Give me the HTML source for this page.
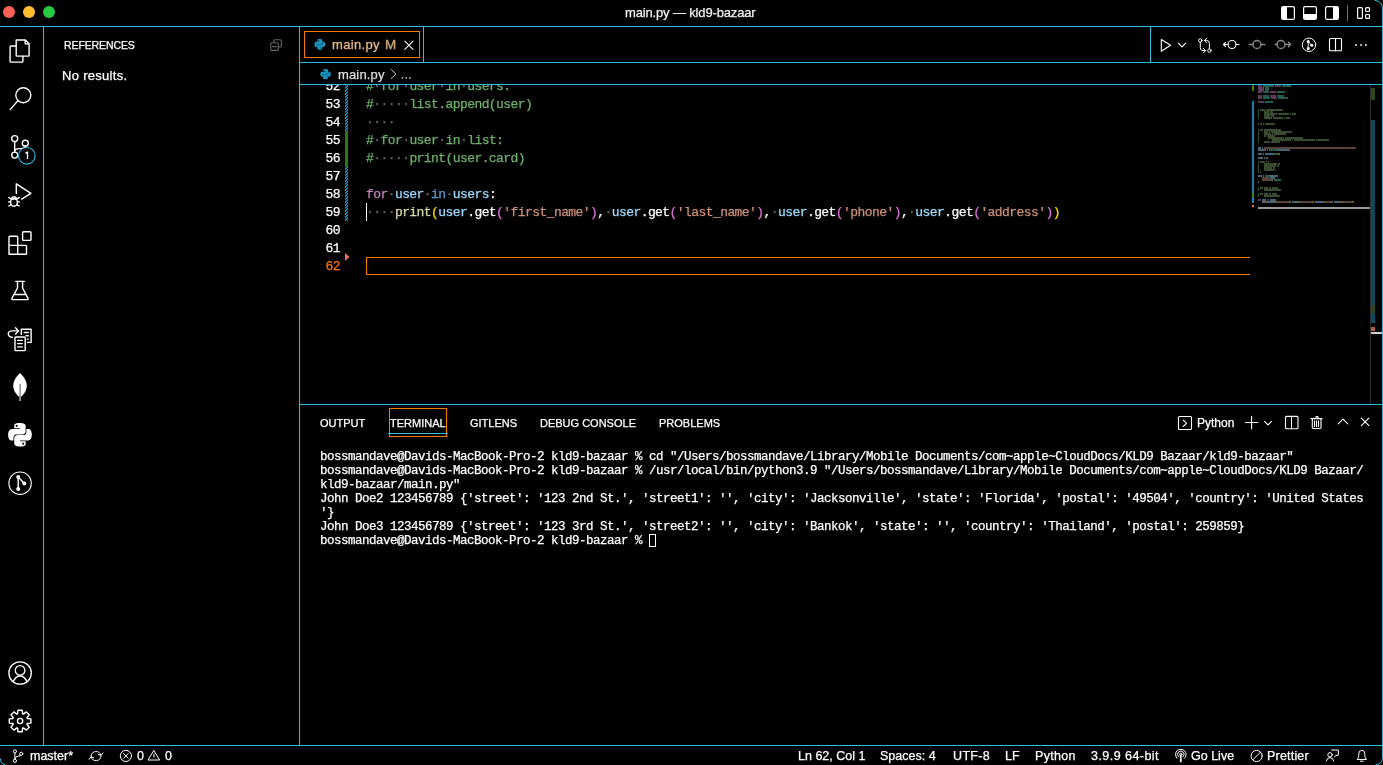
<!DOCTYPE html>
<html><head><meta charset="utf-8">
<style>
*{margin:0;padding:0;box-sizing:border-box}
html,body{width:1383px;height:765px;overflow:hidden;background:#000;color:#fff;font-family:"Liberation Sans",sans-serif}
.t,.cl,.ln,.term,.sb{will-change:transform;-webkit-text-stroke:0.25px currentColor}
.abs{position:absolute}
.b{background:#2dbde0}
.mono{font-family:"Liberation Mono",monospace}
.t{position:absolute;white-space:pre}
.ln{position:absolute;left:0;width:40px;padding-top:1px;text-align:right;font:13px/18px "Liberation Mono",monospace;letter-spacing:-0.6px;height:18px}
.cl{position:absolute;left:66px;padding-top:1px;font:13px/18px "Liberation Mono",monospace;letter-spacing:-0.575px;white-space:pre;height:18px}
.cl i{font-style:normal;color:#666}
.cm{color:#6db26a}.kw{color:#c586c0}.vr{color:#9cdcfe}.ky{color:#569cd6}.fn{color:#dcdcaa}.b1{color:#ffd700}.b2{color:#da70d6}.st{color:#ce9178}
.hatch{background:repeating-linear-gradient(-45deg,#1b81a8 0,#1b81a8 1px,transparent 1px,transparent 3px)}
.term{position:absolute;white-space:pre;font:12.5px/14px "Liberation Mono",monospace;letter-spacing:-0.5px;color:#fff}
.sb{position:absolute;top:749px;font-size:12.5px;white-space:pre;color:#fff}
</style></head><body>
<!-- borders -->
<div class="abs b" style="left:0;top:26px;width:1383px;height:1px"></div>
<div class="abs b" style="left:43px;top:27px;width:1px;height:718px"></div>
<div class="abs b" style="left:299px;top:27px;width:1px;height:718px"></div>
<div class="abs b" style="left:300px;top:62px;width:1083px;height:1px"></div>
<div class="abs b" style="left:423px;top:27px;width:1px;height:35px"></div>
<div class="abs b" style="left:300px;top:84px;width:1083px;height:1px"></div>
<div class="abs b" style="left:300px;top:404px;width:1083px;height:1px"></div>
<div class="abs b" style="left:1382px;top:27px;width:1px;height:718px"></div>
<div class="abs b" style="left:0;top:745px;width:1383px;height:1px"></div>

<!-- traffic lights -->
<div class="abs" style="left:3px;top:6px;width:12px;height:12px;border-radius:50%;background:#fe5f57"></div>
<div class="abs" style="left:23px;top:6px;width:12px;height:12px;border-radius:50%;background:#febc2e"></div>
<div class="abs" style="left:43px;top:6px;width:12px;height:12px;border-radius:50%;background:#28c840"></div>
<div class="t" style="left:625px;top:5px;font-size:13px;letter-spacing:-0.15px;color:#f2f2f2">main.py — kld9-bazaar</div>

<svg class="abs" style="left:0;top:0" width="1383" height="765" viewBox="0 0 1383 765">
<defs><path id="py" d="M14.25.18l.9.2.73.26.59.3.45.32.34.34.25.34.16.33.1.3.04.26.02.2-.01.13V8.5l-.05.63-.13.55-.21.46-.26.38-.3.31-.33.25-.35.19-.35.14-.33.1-.3.07-.26.04-.21.02H8.77l-.69.05-.59.14-.5.22-.41.27-.33.32-.27.35-.2.36-.15.37-.1.35-.07.32-.04.27-.02.21v3.06H3.17l-.21-.03-.28-.07-.32-.12-.35-.18-.36-.26-.36-.36-.35-.46-.32-.59-.28-.73-.21-.88-.14-1.05-.05-1.23.06-1.22.16-1.04.24-.87.32-.71.36-.57.4-.44.42-.33.42-.24.4-.16.36-.1.32-.05.24-.01h.16l.06.01h8.16v-.83H6.18l-.01-2.75-.02-.37.05-.34.11-.31.17-.28.25-.26.31-.23.38-.2.44-.18.51-.15.58-.12.64-.1.71-.06.77-.04.84-.02 1.27.05zm-6.3 1.98l-.23.33-.08.41.08.41.23.34.33.22.41.09.41-.09.33-.22.23-.34.08-.41-.08-.41-.23-.33-.33-.22-.41-.09-.41.09zm13.09 3.95l.28.06.32.12.35.18.36.27.36.35.35.47.32.59.28.73.21.88.14 1.04.05 1.23-.06 1.230-.16 1.04-.24.86-.32.71-.36.57-.4.45-.42.33-.42.24-.4.16-.36.09-.32.05-.24.02-.16-.01h-8.22v.82h5.84l.01 2.76.02.36-.05.34-.11.31-.17.29-.25.25-.31.24-.38.2-.44.17-.51.15-.58.13-.64.09-.71.07-.77.04-.84.01-1.27-.04-1.07-.14-.9-.2-.73-.25-.59-.3-.45-.33-.34-.34-.25-.34-.16-.33-.1-.3-.04-.25-.02-.2.01-.13v-5.34l.05-.64.13-.54.21-.46.26-.38.3-.32.33-.24.35-.2.35-.14.33-.1.3-.06.26-.04.21-.02.13-.01h5.84l.69-.05.59-.14.5-.21.41-.28.33-.32.27-.35.2-.36.15-.36.1-.35.07-.32.04-.28.02-.21V6.07h2.09l.14.01zm-6.47 14.25l-.23.33-.08.41.08.41.23.33.33.23.41.08.41-.08.33-.23.23-.33.08-.41-.08-.41-.23-.33-.33-.23-.41-.08-.41.08z"/></defs>
<g fill="none" stroke="#fff" stroke-width="1.4" stroke-linecap="round" stroke-linejoin="round">
<!-- explorer -->
<path d="M16.2 40 H25.4 L29.1 43.8 V55.2 Q29.1 56.1 28.2 56.1 H17.1 Q16.2 56.1 16.2 55.2 Z M25.2 40.2 V43.9 H29"/>
<path d="M15.9 46 H11 Q10.1 46 10.1 46.9 V61.2 Q10.1 62.1 11 62.1 H22 Q22.9 62.1 22.9 61.2 V56.3"/>
<!-- search -->
<circle cx="23.3" cy="95.2" r="7.5"/>
<path d="M17.8 100.8 L10.2 109.6"/>
<!-- scm -->
<circle cx="14.7" cy="138.6" r="3"/>
<circle cx="25.3" cy="143.2" r="3"/>
<circle cx="14.7" cy="155.1" r="3"/>
<path d="M14.7 141.6 V152.1 M14.7 151 Q15.5 148.6 19 148.6 H21.5 Q25 148.6 25.3 146.2"/>
<!-- run debug -->
<path d="M16.3 193.6 V183.8 L30.9 193.3 L21.7 199.2"/>
<ellipse cx="14" cy="202.2" rx="3.4" ry="4"/>
<path d="M11 198.8 Q14 194.5 17 198.8 M11 199 H17 M8.8 197.6 L10.9 198.8 M19.2 197.6 L17.1 198.8 M8.5 201.9 H10.6 M17.4 201.9 H19.5 M8.8 206 L10.9 204.8 M19.2 206 L17.1 204.8"/>
<!-- extensions -->
<rect x="22.6" y="231.8" width="8.4" height="8.6" rx="1"/>
<path d="M9 254.3 V237.1 Q9 236.2 9.9 236.2 H16.8 Q17.7 236.2 17.7 237.1 V245.4 H25.6 Q26.5 245.4 26.5 246.3 V253.4 Q26.5 254.3 25.6 254.3 Z M9 245.4 H17.7 V254.3"/>
<!-- testing -->
<path d="M15.8 281.4 H24.3 M17.5 281.4 V288 L11.9 298.4 Q11.5 299.6 12.8 299.6 H27.3 Q28.5 299.6 28 298.4 L22.6 288 V281.4 M14.6 294.5 H25.5"/>
<!-- remote/todo -->
<rect x="15" y="337" width="10.2" height="13.6" rx="0.8" stroke-width="1.4"/>
<path d="M17.6 340.4 H22.2 M17.6 343.6 H22.2 M17.6 346.9 H22.2" stroke-width="1.4"/>
<path d="M21.3 334.4 V329.3 H31.1 V342.4 H27.6 M24.3 332.5 H28.3 M26 335.8 H28.3 M27.2 339.1 H28.3" stroke-width="1.4"/>
<path d="M12.3 337.5 Q8.3 336.8 8.3 333.8 Q8.3 330.9 12.3 330.9 H18 M15.6 327.8 L18.6 330.9 L15.6 334" stroke-width="1.4"/>
<!-- gitlens -->
<circle cx="20.1" cy="483.2" r="11.2" stroke-width="1.1"/>
<path d="M18.2 477.1 V489 M18.2 477.1 L24.3 483.4"/>
<!-- account -->
<circle cx="20.1" cy="673" r="11.2" stroke-width="1.3"/>
<circle cx="20.1" cy="670.4" r="4.8" stroke-width="1.3"/>
<path d="M13.2 681.5 Q16 676 20.1 676 Q24.2 676 27 681.5" stroke-width="1.3"/>
<!-- gear -->
<path d="M17.56 713.84 L18.00 710.20 L22.20 710.20 L22.64 713.84 L23.37 714.14 L26.25 711.88 L29.22 714.85 L26.96 717.73 L27.26 718.46 L30.90 718.90 L30.90 723.10 L27.26 723.54 L26.96 724.27 L29.22 727.15 L26.25 730.12 L23.37 727.86 L22.64 728.16 L22.20 731.80 L18.00 731.80 L17.56 728.16 L16.83 727.86 L13.95 730.12 L10.98 727.15 L13.24 724.27 L12.94 723.54 L9.30 723.10 L9.30 718.90 L12.94 718.46 L13.24 717.73 L10.98 714.85 L13.95 711.88 L16.83 714.14 Z" stroke-width="1.4"/>
<circle cx="20.1" cy="721" r="2.6" stroke-width="1.4"/>
</g>
<g fill="#fff">
<circle cx="18.2" cy="477.1" r="2"/><circle cx="24.3" cy="483.4" r="2"/><circle cx="18.2" cy="489" r="2"/>
<path d="M20 373 C24 377 26.9 381 26.8 386 C26.6 391 23.5 395 20.1 397.6 C16.7 395 13.4 391 13.2 386 C13.1 381 16 377 20 373 Z"/>
<rect x="19.3" y="396" width="1.6" height="5" fill="#aaa"/>
<path d="M20.1 384 V397" stroke="#555" stroke-width="1"/>
<use href="#py" transform="translate(8.2 423) scale(0.98)" fill-rule="evenodd"/>
</g>
<!-- scm badge -->
<circle cx="26.8" cy="155.8" r="8.3" fill="#000" stroke="#2dbde0" stroke-width="1.1"/>

</svg>
<svg class="abs" style="left:0;top:0" width="1383" height="765" viewBox="0 0 1383 765">
<g fill="none" stroke-linecap="round" stroke-linejoin="round">
<!-- collapse all -->
<g stroke="#646464" stroke-width="1.1">
<rect x="270.7" y="42.8" width="7.6" height="7.6" rx="1"/>
<path d="M273.8 42.6 V40.7 Q273.8 39.7 274.8 39.7 H280.3 Q281.3 39.7 281.3 40.7 V46 Q281.3 47 280.3 47 H278.5 M272.4 46.6 H276.6"/>
</g>
<!-- title layout icons -->
<g stroke="#fff" stroke-width="1.2">
<rect x="1281.6" y="6.6" width="12.8" height="12.8" rx="1.5"/>
<rect x="1303.6" y="6.6" width="12.8" height="12.8" rx="1.5"/>
<rect x="1325.6" y="6.6" width="12.8" height="12.8" rx="1.5"/>
<rect x="1357.6" y="7.6" width="4.8" height="10.8" rx="1"/>
<rect x="1365.6" y="7.6" width="3.9" height="3.9" rx="1"/>
<rect x="1365.6" y="14.5" width="3.9" height="3.9" rx="1"/>
</g>
<path d="M1347.5 5.5 V20.5" stroke="#707070" stroke-width="1"/>
<!-- tab close -->
<path d="M404.8 41.2 L413 49.4 M413 41.2 L404.8 49.4" stroke="#fff" stroke-width="1.1"/>
<!-- tab actions -->
<g stroke="#fff" stroke-width="1.1">
<path d="M1161.3 39.5 V51.2 L1170.6 45.3 Z"/>
<path d="M1178.3 43.2 L1182 46.9 L1185.7 43.2"/>
<g stroke-width="1">
<circle cx="1200.3" cy="40.5" r="1.7"/>
<circle cx="1209.4" cy="50.6" r="1.7"/>
<path d="M1200.3 42.2 V47.6 Q1200.3 50.6 1203 50.6 H1205.4 M1203.3 48.3 L1205.6 50.6 L1203.3 52.9"/>
<path d="M1209.4 48.9 V43.4 Q1209.4 40.4 1206.7 40.4 H1204.5 M1206.8 38.1 L1204.5 40.4 L1206.8 42.7"/>
</g>
<circle cx="1232" cy="44.5" r="4"/>
<path d="M1228 44.5 H1223.5 M1236 44.5 H1239 M1225.6 42.3 L1223.5 44.5 L1225.6 46.7"/>
<rect x="1329.5" y="38.5" width="12" height="12.2" rx="1"/><path d="M1335.5 38.5 V50.7"/>
<circle cx="1309" cy="44.8" r="6.7" stroke-width="1"/>
</g>
<g stroke="#8a8a8a" stroke-width="1.3">
<circle cx="1257" cy="44.5" r="4"/>
<path d="M1249.2 44.5 H1253 M1261 44.5 H1264.8"/>
<circle cx="1281" cy="44.5" r="4"/>
<path d="M1275.2 44.5 H1277 M1285 44.5 H1290.5 M1288.5 42.3 L1290.6 44.5 L1288.5 46.7"/>
</g>
<path d="M1308.2 41.6 V48.5 M1308.2 41.6 L1311.8 45.2" stroke="#fff" stroke-width="0.9"/>
<g fill="#fff"><circle cx="1308.2" cy="41.4" r="1.5"/><circle cx="1311.8" cy="45.3" r="1.5"/><circle cx="1308.2" cy="48.6" r="1.5"/>
<circle cx="1356" cy="45" r="0.9"/><circle cx="1361" cy="45" r="0.9"/><circle cx="1366" cy="45" r="0.9"/></g>
<!-- breadcrumb chevron -->
<path d="M391.3 69.5 L395.8 74 L391.3 78.5" stroke="#ccc" stroke-width="1"/>
<!-- panel header icons -->
<g stroke="#fff" stroke-width="1.1">
<rect x="1178.5" y="416.5" width="13" height="13" rx="1"/>
<path d="M1183.3 420.2 L1186.5 423.3 L1183.3 426.5"/>
<path d="M1245.5 422.5 H1257.7 M1251.6 416.3 V428.8"/>
<path d="M1264.5 421.3 L1268 424.8 L1271.5 421.3"/>
<rect x="1285.5" y="416.4" width="12.5" height="12.4" rx="1"/>
<path d="M1291.5 416.4 V428.8" stroke-width="1"/>
<path d="M1311 418.6 H1322 M1316 418.4 V417.2 Q1316 416.6 1316.6 416.6 H1317.5 Q1318.1 416.6 1318.1 417.2 V418.4 M1312.3 418.8 V427.6 Q1312.3 428.5 1313.2 428.5 H1320.1 Q1321 428.5 1321 427.6 V418.8 M1314.5 420.8 V426.4 M1316.5 420.8 V426.4 M1318.5 420.8 V426.4"/>
<path d="M1338.2 423.8 L1343 419.2 L1347.8 423.8"/>
<path d="M1361.3 418.1 L1368.9 425.7 M1368.9 418.1 L1361.3 425.7"/>
</g>
<!-- status bar icons -->
<g stroke="#fff" stroke-width="1">
<circle cx="14.9" cy="751.4" r="1.6"/><circle cx="14.9" cy="760.8" r="1.6"/><circle cx="21.2" cy="753.8" r="1.6"/>
<path d="M14.9 753 V759.2 M14.9 758.8 Q15.4 756.4 18 756.2 Q20.8 756 21.2 755.4"/>
<path d="M91.1 756.2 A5 5 0 0 1 100.9 755.2 M103 752.9 L101 755.4 L98.4 754.4 M101 756 A5 5 0 0 1 91.2 757 M89.1 759.3 L91.1 756.8 L93.7 757.8"/>
<circle cx="125.9" cy="755.9" r="5.6"/>
<path d="M123.6 753.6 L128.2 758.2 M128.2 753.6 L123.6 758.2"/>
<path d="M154 750.8 L159.6 760 H148.4 Z M154 754 V757.2"/>
<circle cx="1180.8" cy="754.4" r="1.2"/>
<path d="M1178.3 756.6 A3.3 3.3 0 1 1 1183.3 756.6 M1176.9 758.2 A5.3 5.3 0 1 1 1184.7 758.2" stroke-width="1"/>
<path d="M1180.8 755.5 V761.4" stroke-width="1.8"/>
<circle cx="1256.6" cy="756" r="5.6"/>
<path d="M1252.7 759.9 L1260.5 752.1"/>
<circle cx="1330" cy="754.8" r="2.2"/>
<path d="M1326.3 761 Q1326.8 757.6 1330 757.6 Q1333.2 757.6 1333.7 761 M1331.5 750 H1338.3 V755.4 H1336 L1334.4 757"/>
<path d="M1357.4 759.2 Q1358.8 758 1358.8 755.5 V753.8 Q1358.8 750.3 1361.8 750.3 Q1364.8 750.3 1364.8 753.8 V755.5 Q1364.8 758 1366.2 759.2 Z M1360.4 761.2 H1363.2"/>
</g>
<!-- window right border + corners -->
<path d="M0.4 759 Q0.6 764.4 5 764.6" stroke="#2dbde0" stroke-width="1"/>
<path d="M1375 0.4 Q1382.5 1 1382.5 9 V757 Q1382.5 764.5 1376 764.6" stroke="#2dbde0" stroke-width="1"/>
</g>
<g fill="#1a95c3">
<use href="#py" transform="translate(314.5 39) scale(0.445)" fill-rule="evenodd"/>
<use href="#py" transform="translate(320.4 69) scale(0.43)" fill-rule="evenodd"/>
</g>
<g fill="#ccc"><circle cx="402.5" cy="77.8" r="0.9"/><circle cx="406.2" cy="77.8" r="0.9"/><circle cx="409.9" cy="77.8" r="0.9"/></g>
</svg>
<div class="abs" style="left:1282px;top:7px;width:5px;height:12px;background:#fff;border-radius:1px 0 0 1px"></div>
<div class="abs" style="left:1304px;top:14px;width:12px;height:5px;background:#fff;border-radius:0 0 1px 1px"></div>
<div class="abs" style="left:1333px;top:7px;width:5px;height:12px;background:#fff;border-radius:0 1px 1px 0"></div>
<svg class="abs" style="left:0;top:0" width="40" height="170"><path d="M25.5 153.4 L27.5 152 V158.9" stroke="#fff" stroke-width="1.3" fill="none" stroke-linejoin="round"/></svg>
<!-- sidebar -->
<div class="t" style="left:64px;top:39px;font-size:10.5px;letter-spacing:-0.1px">REFERENCES</div>
<div class="t" style="left:62px;top:68px;font-size:13px;letter-spacing:0.3px">No results.</div>

<!-- tab -->
<div class="abs" style="left:304px;top:31px;width:116px;height:27px;border:1px solid #f97800"></div>
<div class="t" style="left:332px;top:37px;font-size:13px;letter-spacing:0.33px;color:#ecbd86">main.py</div>
<div class="t" style="left:384.5px;top:38px;font-size:12px;-webkit-text-stroke:0.35px #caa57c;color:#caa57c;transform:scaleX(1.12);transform-origin:0 0">M</div>

<!-- breadcrumbs -->
<div class="t" style="left:338px;top:67px;font-size:13px;letter-spacing:0.15px;color:#ddd">main.py</div>

<!-- editor -->
<div class="abs" id="editor" style="left:300px;top:85px;width:1082px;height:319px;overflow:hidden">
<div class="ln" style="top:-8px;color:#fff">52</div>
<div class="cl" style="top:-8px"><span class="cm">#</span><i>·</i><span class="cm">for</span><i>·</i><span class="cm">user</span><i>·</i><span class="cm">in</span><i>·</i><span class="cm">users:</span></div>
<div class="ln" style="top:10px;color:#fff">53</div>
<div class="cl" style="top:10px"><span class="cm">#</span><i>·····</i><span class="cm">list.append(user)</span></div>
<div class="ln" style="top:28px;color:#fff">54</div>
<div class="cl" style="top:28px"><i>····</i></div>
<div class="ln" style="top:46px;color:#fff">55</div>
<div class="cl" style="top:46px"><span class="cm">#</span><i>·</i><span class="cm">for</span><i>·</i><span class="cm">user</span><i>·</i><span class="cm">in</span><i>·</i><span class="cm">list:</span></div>
<div class="ln" style="top:64px;color:#fff">56</div>
<div class="cl" style="top:64px"><span class="cm">#</span><i>·····</i><span class="cm">print(user.card)</span></div>
<div class="ln" style="top:82px;color:#fff">57</div>
<div class="cl" style="top:82px"></div>
<div class="ln" style="top:100px;color:#fff">58</div>
<div class="cl" style="top:100px"><span class="kw">for</span><i>·</i><span class="vr">user</span><i>·</i><span class="ky">in</span><i>·</i><span class="vr">users</span>:</div>
<div class="ln" style="top:118px;color:#fff">59</div>
<div class="cl" style="top:118px"><i>····</i><span class="fn">print</span><span class="b1">(</span><span class="vr">user</span>.get<span class="b2">(</span><span class="st">'first_name'</span><span class="b2">)</span>,<i>·</i><span class="vr">user</span>.get<span class="b2">(</span><span class="st">'last_name'</span><span class="b2">)</span>,<i>·</i><span class="vr">user</span>.get<span class="b2">(</span><span class="st">'phone'</span><span class="b2">)</span>,<i>·</i><span class="vr">user</span>.get<span class="b2">(</span><span class="st">'address'</span><span class="b2">)</span><span class="b1">)</span></div>
<div class="ln" style="top:136px;color:#fff">60</div>
<div class="cl" style="top:136px"></div>
<div class="ln" style="top:154px;color:#fff">61</div>
<div class="cl" style="top:154px"></div>
<div class="ln" style="top:172px;color:#f97800">62</div>
<div class="cl" style="top:172px"></div>
<svg class="abs" style="left:45px;top:0" width="3" height="136"><defs><pattern id="hp" width="3" height="3" patternUnits="userSpaceOnUse" y="1"><rect x="1" y="0" width="2" height="1" fill="#1b8ec0"/><rect x="0" y="1" width="2" height="1" fill="#1b8ec0"/><rect x="0" y="2" width="1" height="1" fill="#1b8ec0"/><rect x="2" y="2" width="1" height="1" fill="#1b8ec0"/></pattern></defs><rect x="0" y="0" width="3" height="46" fill="url(#hp)"/><rect x="0" y="82" width="3" height="54" fill="url(#hp)"/></svg>
<div class="abs" style="left:45px;top:46px;width:3px;height:36px;background:#2a7814"></div>

<div class="abs" style="left:66px;top:118px;width:1px;height:18px;background:#fff"></div>
<div class="abs" style="left:66px;top:172px;width:884px;height:18px;border:1px solid #f97800;border-right:none"></div>
<svg class="abs" style="left:45px;top:168px" width="5" height="9"><path d="M0 0 L4.5 4 L0 8 Z" fill="#f2705f"/></svg>
</div>
<!-- minimap -->
<svg class="abs" style="left:0;top:0" width="1383" height="765"><g opacity="0.45"><rect x="1258" y="85" width="4" height="2" fill="#c586c0"/><rect x="1263" y="85" width="11" height="2" fill="#4ec9b0"/><rect x="1275" y="85" width="6" height="2" fill="#c586c0"/><rect x="1282" y="85" width="9" height="2" fill="#4ec9b0"/><rect x="1258" y="87" width="6" height="2" fill="#c586c0"/><rect x="1265" y="87" width="4" height="2" fill="#4ec9b0"/><rect x="1258" y="89" width="6" height="2" fill="#c586c0"/><rect x="1265" y="89" width="4" height="2" fill="#4ec9b0"/><rect x="1258" y="91" width="4" height="2" fill="#c586c0"/><rect x="1263" y="91" width="6" height="2" fill="#4ec9b0"/><rect x="1270" y="91" width="6" height="2" fill="#c586c0"/><rect x="1277" y="91" width="8" height="2" fill="#4ec9b0"/><rect x="1258" y="95" width="4" height="2" fill="#c586c0"/><rect x="1263" y="95" width="6" height="2" fill="#4ec9b0"/><rect x="1270" y="95" width="6" height="2" fill="#c586c0"/><rect x="1277" y="95" width="7" height="2" fill="#4ec9b0"/><rect x="1258" y="97" width="4" height="2" fill="#c586c0"/><rect x="1263" y="97" width="7" height="2" fill="#4ec9b0"/><rect x="1271" y="97" width="6" height="2" fill="#c586c0"/><rect x="1278" y="97" width="10" height="2" fill="#4ec9b0"/><rect x="1258" y="101" width="6" height="2" fill="#c586c0"/><rect x="1265" y="101" width="8" height="2" fill="#4ec9b0"/><rect x="1258" y="109" width="1" height="2" fill="#7ca668"/><rect x="1260" y="109" width="5" height="2" fill="#7ca668"/><rect x="1266" y="109" width="17" height="2" fill="#7ca668"/><rect x="1258" y="111" width="1" height="2" fill="#7ca668"/><rect x="1264" y="111" width="5" height="2" fill="#7ca668"/><rect x="1270" y="111" width="3" height="2" fill="#7ca668"/><rect x="1258" y="113" width="1" height="2" fill="#7ca668"/><rect x="1264" y="113" width="13" height="2" fill="#7ca668"/><rect x="1278" y="113" width="11" height="2" fill="#7ca668"/><rect x="1290" y="113" width="1" height="2" fill="#7ca668"/><rect x="1292" y="113" width="4" height="2" fill="#7ca668"/><rect x="1258" y="115" width="1" height="2" fill="#7ca668"/><rect x="1264" y="115" width="6" height="2" fill="#7ca668"/><rect x="1271" y="115" width="3" height="2" fill="#7ca668"/><rect x="1258" y="117" width="1" height="2" fill="#7ca668"/><rect x="1264" y="117" width="8" height="2" fill="#7ca668"/><rect x="1273" y="117" width="10" height="2" fill="#7ca668"/><rect x="1284" y="117" width="1" height="2" fill="#7ca668"/><rect x="1286" y="117" width="4" height="2" fill="#7ca668"/><rect x="1258" y="123" width="1" height="2" fill="#7ca668"/><rect x="1260" y="123" width="2" height="2" fill="#7ca668"/><rect x="1263" y="123" width="1" height="2" fill="#7ca668"/><rect x="1265" y="123" width="10" height="2" fill="#7ca668"/><rect x="1258" y="129" width="1" height="2" fill="#7ca668"/><rect x="1260" y="129" width="3" height="2" fill="#7ca668"/><rect x="1264" y="129" width="17" height="2" fill="#7ca668"/><rect x="1258" y="131" width="1" height="2" fill="#7ca668"/><rect x="1264" y="131" width="4" height="2" fill="#7ca668"/><rect x="1269" y="131" width="1" height="2" fill="#7ca668"/><rect x="1271" y="131" width="21" height="2" fill="#7ca668"/><rect x="1258" y="133" width="1" height="2" fill="#7ca668"/><rect x="1264" y="133" width="7" height="2" fill="#7ca668"/><rect x="1272" y="133" width="1" height="2" fill="#7ca668"/><rect x="1274" y="133" width="12" height="2" fill="#7ca668"/><rect x="1258" y="135" width="1" height="2" fill="#7ca668"/><rect x="1264" y="135" width="2" height="2" fill="#7ca668"/><rect x="1267" y="135" width="8" height="2" fill="#7ca668"/><rect x="1258" y="137" width="1" height="2" fill="#7ca668"/><rect x="1268" y="137" width="16" height="2" fill="#7ca668"/><rect x="1285" y="137" width="18" height="2" fill="#7ca668"/><rect x="1258" y="139" width="1" height="2" fill="#7ca668"/><rect x="1272" y="139" width="19" height="2" fill="#7ca668"/><rect x="1292" y="139" width="1" height="2" fill="#7ca668"/><rect x="1294" y="139" width="21" height="2" fill="#7ca668"/><rect x="1316" y="139" width="13" height="2" fill="#7ca668"/><rect x="1258" y="141" width="1" height="2" fill="#7ca668"/><rect x="1264" y="141" width="6" height="2" fill="#7ca668"/><rect x="1271" y="141" width="9" height="2" fill="#7ca668"/><rect x="1258" y="147" width="3" height="2" fill="#9cdcfe"/><rect x="1262" y="147" width="1" height="2" fill="#d4d4d4"/><rect x="1264" y="147" width="92" height="2" fill="#ce9178"/><rect x="1258" y="149" width="8" height="2" fill="#9cdcfe"/><rect x="1267" y="149" width="1" height="2" fill="#d4d4d4"/><rect x="1269" y="149" width="8" height="2" fill="#4ec9b0"/><rect x="1277" y="149" width="1" height="2" fill="#d4d4d4"/><rect x="1278" y="149" width="3" height="2" fill="#9cdcfe"/><rect x="1281" y="149" width="1" height="2" fill="#ffd700"/><rect x="1282" y="149" width="3" height="2" fill="#9cdcfe"/><rect x="1285" y="149" width="1" height="2" fill="#d4d4d4"/><rect x="1286" y="149" width="3" height="2" fill="#9cdcfe"/><rect x="1289" y="149" width="1" height="2" fill="#ffd700"/><rect x="1258" y="153" width="4" height="2" fill="#9cdcfe"/><rect x="1263" y="153" width="1" height="2" fill="#d4d4d4"/><rect x="1265" y="153" width="8" height="2" fill="#9cdcfe"/><rect x="1273" y="153" width="1" height="2" fill="#d4d4d4"/><rect x="1274" y="153" width="4" height="2" fill="#4ec9b0"/><rect x="1278" y="153" width="2" height="2" fill="#ffd700"/><rect x="1258" y="157" width="5" height="2" fill="#9cdcfe"/><rect x="1264" y="157" width="1" height="2" fill="#d4d4d4"/><rect x="1266" y="157" width="2" height="2" fill="#d4d4d4"/><rect x="1258" y="161" width="1" height="2" fill="#7ca668"/><rect x="1260" y="161" width="5" height="2" fill="#7ca668"/><rect x="1266" y="161" width="1" height="2" fill="#7ca668"/><rect x="1268" y="161" width="1" height="2" fill="#7ca668"/><rect x="1258" y="163" width="1" height="2" fill="#7ca668"/><rect x="1264" y="163" width="13" height="2" fill="#7ca668"/><rect x="1278" y="163" width="2" height="2" fill="#7ca668"/><rect x="1258" y="165" width="1" height="2" fill="#7ca668"/><rect x="1264" y="165" width="12" height="2" fill="#7ca668"/><rect x="1277" y="165" width="2" height="2" fill="#7ca668"/><rect x="1258" y="167" width="1" height="2" fill="#7ca668"/><rect x="1264" y="167" width="8" height="2" fill="#7ca668"/><rect x="1273" y="167" width="2" height="2" fill="#7ca668"/><rect x="1258" y="169" width="1" height="2" fill="#7ca668"/><rect x="1264" y="169" width="10" height="2" fill="#7ca668"/><rect x="1275" y="169" width="1" height="2" fill="#7ca668"/><rect x="1258" y="171" width="1" height="2" fill="#7ca668"/><rect x="1260" y="171" width="1" height="2" fill="#7ca668"/><rect x="1258" y="175" width="4" height="2" fill="#9cdcfe"/><rect x="1263" y="175" width="1" height="2" fill="#d4d4d4"/><rect x="1265" y="175" width="4" height="2" fill="#4ec9b0"/><rect x="1269" y="175" width="1" height="2" fill="#d4d4d4"/><rect x="1270" y="175" width="5" height="2" fill="#9cdcfe"/><rect x="1275" y="175" width="1" height="2" fill="#ffd700"/><rect x="1276" y="175" width="1" height="2" fill="#9cdcfe"/><rect x="1277" y="175" width="1" height="2" fill="#ffd700"/><rect x="1262" y="177" width="6" height="2" fill="#ce9178"/><rect x="1268" y="177" width="1" height="2" fill="#d4d4d4"/><rect x="1270" y="177" width="4" height="2" fill="#9cdcfe"/><rect x="1274" y="177" width="1" height="2" fill="#d4d4d4"/><rect x="1262" y="179" width="10" height="2" fill="#ce9178"/><rect x="1272" y="179" width="1" height="2" fill="#d4d4d4"/><rect x="1274" y="179" width="7" height="2" fill="#4ec9b0"/><rect x="1258" y="181" width="1" height="2" fill="#d4d4d4"/><rect x="1258" y="187" width="1" height="2" fill="#7ca668"/><rect x="1260" y="187" width="3" height="2" fill="#7ca668"/><rect x="1264" y="187" width="4" height="2" fill="#7ca668"/><rect x="1269" y="187" width="2" height="2" fill="#7ca668"/><rect x="1272" y="187" width="6" height="2" fill="#7ca668"/><rect x="1258" y="189" width="1" height="2" fill="#7ca668"/><rect x="1264" y="189" width="17" height="2" fill="#7ca668"/><rect x="1258" y="193" width="1" height="2" fill="#7ca668"/><rect x="1260" y="193" width="3" height="2" fill="#7ca668"/><rect x="1264" y="193" width="4" height="2" fill="#7ca668"/><rect x="1269" y="193" width="2" height="2" fill="#7ca668"/><rect x="1272" y="193" width="5" height="2" fill="#7ca668"/><rect x="1258" y="195" width="1" height="2" fill="#7ca668"/><rect x="1264" y="195" width="16" height="2" fill="#7ca668"/><rect x="1258" y="199" width="3" height="2" fill="#c586c0"/><rect x="1262" y="199" width="4" height="2" fill="#9cdcfe"/><rect x="1267" y="199" width="2" height="2" fill="#569cd6"/><rect x="1270" y="199" width="5" height="2" fill="#9cdcfe"/><rect x="1275" y="199" width="1" height="2" fill="#d4d4d4"/><rect x="1262" y="201" width="5" height="2" fill="#dcdcaa"/><rect x="1267" y="201" width="1" height="2" fill="#ffd700"/><rect x="1268" y="201" width="4" height="2" fill="#9cdcfe"/><rect x="1272" y="201" width="1" height="2" fill="#d4d4d4"/><rect x="1273" y="201" width="3" height="2" fill="#9cdcfe"/><rect x="1276" y="201" width="1" height="2" fill="#ffd700"/><rect x="1277" y="201" width="12" height="2" fill="#ce9178"/><rect x="1289" y="201" width="1" height="2" fill="#ffd700"/><rect x="1290" y="201" width="1" height="2" fill="#d4d4d4"/><rect x="1292" y="201" width="4" height="2" fill="#9cdcfe"/><rect x="1296" y="201" width="1" height="2" fill="#d4d4d4"/><rect x="1297" y="201" width="3" height="2" fill="#9cdcfe"/><rect x="1300" y="201" width="1" height="2" fill="#ffd700"/><rect x="1301" y="201" width="11" height="2" fill="#ce9178"/><rect x="1312" y="201" width="1" height="2" fill="#ffd700"/><rect x="1313" y="201" width="1" height="2" fill="#d4d4d4"/><rect x="1315" y="201" width="4" height="2" fill="#9cdcfe"/><rect x="1319" y="201" width="1" height="2" fill="#d4d4d4"/><rect x="1320" y="201" width="3" height="2" fill="#9cdcfe"/><rect x="1323" y="201" width="1" height="2" fill="#ffd700"/><rect x="1324" y="201" width="7" height="2" fill="#ce9178"/><rect x="1331" y="201" width="1" height="2" fill="#ffd700"/><rect x="1332" y="201" width="1" height="2" fill="#d4d4d4"/><rect x="1334" y="201" width="4" height="2" fill="#9cdcfe"/><rect x="1338" y="201" width="1" height="2" fill="#d4d4d4"/><rect x="1339" y="201" width="3" height="2" fill="#9cdcfe"/><rect x="1342" y="201" width="1" height="2" fill="#ffd700"/><rect x="1343" y="201" width="9" height="2" fill="#ce9178"/><rect x="1352" y="201" width="2" height="2" fill="#ffd700"/></g><rect x="1258" y="207" width="112" height="2" fill="#9a9a9a"/><rect x="1252" y="85" width="2" height="6" fill="#487e02"/><rect x="1252" y="101" width="2" height="92" fill="#1b81a8"/><rect x="1252" y="193" width="2" height="4" fill="#487e02"/><rect x="1252" y="197" width="2" height="6" fill="#1b81a8"/><rect x="1252" y="205" width="2" height="2" fill="#f2705f"/><rect x="1370" y="85" width="1" height="319" fill="#2e2e2e"/><rect x="1371" y="88" width="4" height="12" fill="#2b4a17"/><rect x="1371" y="120" width="4" height="203" fill="#0d4c60"/><rect x="1371" y="305" width="4" height="8" fill="#2b4a17"/><rect x="1371" y="327" width="4" height="4" fill="#b0584f"/><rect x="1371" y="332" width="11" height="2" fill="#cfcfcf"/></svg>
<!-- panel tabs -->
<div class="t" style="left:320px;top:417px;font-size:11px">OUTPUT</div>
<div class="t" style="left:390px;top:417px;font-size:11px">TERMINAL</div>
<div class="t" style="left:470px;top:417px;font-size:11px">GITLENS</div>
<div class="t" style="left:540px;top:417px;font-size:11px">DEBUG CONSOLE</div>
<div class="t" style="left:659px;top:417px;font-size:11px">PROBLEMS</div>

<!-- terminal -->
<div class="term" style="left:320px;top:450px">bossmandave@Davids-MacBook-Pro-2 kld9-bazaar % cd "/Users/bossmandave/Library/Mobile Documents/com~apple~CloudDocs/KLD9 Bazaar/kld9-bazaar"
bossmandave@Davids-MacBook-Pro-2 kld9-bazaar % /usr/local/bin/python3.9 "/Users/bossmandave/Library/Mobile Documents/com~apple~CloudDocs/KLD9 Bazaar/
kld9-bazaar/main.py"
John Doe2 123456789 {'street': '123 2nd St.', 'street1': '', 'city': 'Jacksonville', 'state': 'Florida', 'postal': '49504', 'country': 'United States
'}
John Doe3 123456789 {'street': '123 3rd St.', 'street2': '', 'city': 'Bankok', 'state': '', 'country': 'Thailand', 'postal': 259859}
bossmandave@Davids-MacBook-Pro-2 kld9-bazaar % </div>
<div class="abs" style="left:649px;top:534px;width:7px;height:13px;border:1px solid #fff"></div>
<!-- terminal tab focus -->
<div class="abs" style="left:389px;top:408px;width:58px;height:29px;border:1px solid #f97800"></div>
<div class="abs b" style="left:388px;top:433px;width:60px;height:1px"></div>
<!-- status bar -->
<div class="sb" style="left:30px">master*</div>
<div class="sb" style="left:137px">0</div>
<div class="sb" style="left:165px">0</div>
<div class="sb" style="left:798px">Ln 62, Col 1</div>
<div class="sb" style="left:880px">Spaces: 4</div>
<div class="sb" style="left:953px;letter-spacing:0.35px">UTF-8</div>
<div class="sb" style="left:1005px">LF</div>
<div class="sb" style="left:1035px;letter-spacing:0.3px">Python</div>
<div class="sb" style="left:1091px;letter-spacing:0.45px">3.9.9 64-bit</div>
<div class="sb" style="left:1191px">Go Live</div>
<div class="sb" style="left:1267px;letter-spacing:0.2px">Prettier</div>
<div class="t" style="left:1197px;top:416px;font-size:12px">Python</div>
<div class="abs b" style="left:1150px;top:27px;width:1px;height:35px"></div>
</body></html>
